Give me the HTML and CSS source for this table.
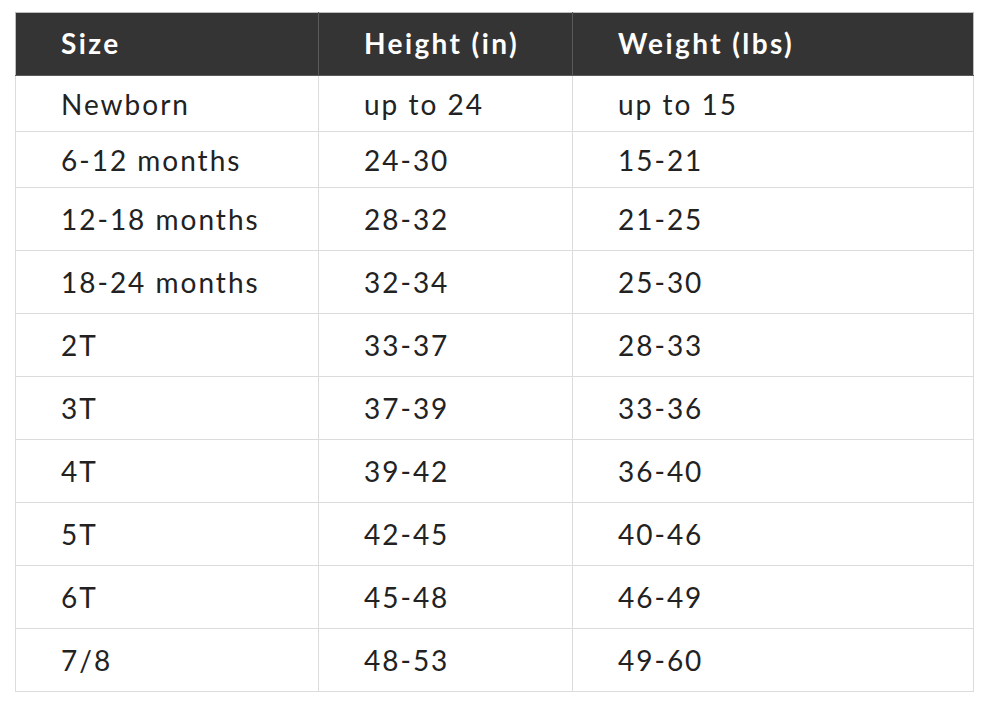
FILE: index.html
```html
<!DOCTYPE html>
<html>
<head>
<meta charset="utf-8">
<link rel="stylesheet" href="styles.css">
</head>
<body>
<table class="chart">
  <colgroup>
    <col class="c1"><col class="c2"><col class="c3">
  </colgroup>
  <thead>
    <tr><th>Size</th><th>Height (in)</th><th>Weight (lbs)</th></tr>
  </thead>
  <tbody>
    <tr class="short"><td>Newborn</td><td>up to 24</td><td>up to 15</td></tr>
    <tr class="short"><td>6-12 months</td><td>24-30</td><td>15-21</td></tr>
    <tr><td>12-18 months</td><td>28-32</td><td>21-25</td></tr>
    <tr><td>18-24 months</td><td>32-34</td><td>25-30</td></tr>
    <tr><td>2T</td><td>33-37</td><td>28-33</td></tr>
    <tr><td>3T</td><td>37-39</td><td>33-36</td></tr>
    <tr><td>4T</td><td>39-42</td><td>36-40</td></tr>
    <tr><td>5T</td><td>42-45</td><td>40-46</td></tr>
    <tr><td>6T</td><td>45-48</td><td>46-49</td></tr>
    <tr><td>7/8</td><td>48-53</td><td>49-60</td></tr>
  </tbody>
</table>
</body>
</html>
```

FILE: styles.css
```css
html, body {
  margin: 0;
  background: #ffffff;
}
body {
  padding: 12px 0 0 15px;
  font-family: Lato, "Open Sans", sans-serif;
}
.chart {
  border-collapse: collapse;
  table-layout: fixed;
  width: 958px;
  font-size: 28px;
  letter-spacing: 2px;
  color: #222222;
}
.c1 { width: 303px; }
.c2 { width: 254px; }
.c3 { width: 401px; }
.chart th,
.chart td {
  text-align: left;
  padding: 0 0 0 45px;
  border: 1px solid #dcdcdc;
  vertical-align: middle;
  white-space: nowrap;
}
.chart th {
  background: #343434;
  color: #ffffff;
  font-weight: 700;
  letter-spacing: 2.4px;
  height: 63px;
  border-color: #5a5a5a;
  border-top-color: #bdbdbd;
  padding-bottom: 3px;
  box-sizing: border-box;
}
.chart th:first-child { border-left-color: #bdbdbd; }
.chart th:last-child { border-right-color: #bdbdbd; }
.chart td {
  height: 63px;
  box-sizing: border-box;
  font-weight: 400;
}
.chart tr.short td {
  height: 56px;
}
```
